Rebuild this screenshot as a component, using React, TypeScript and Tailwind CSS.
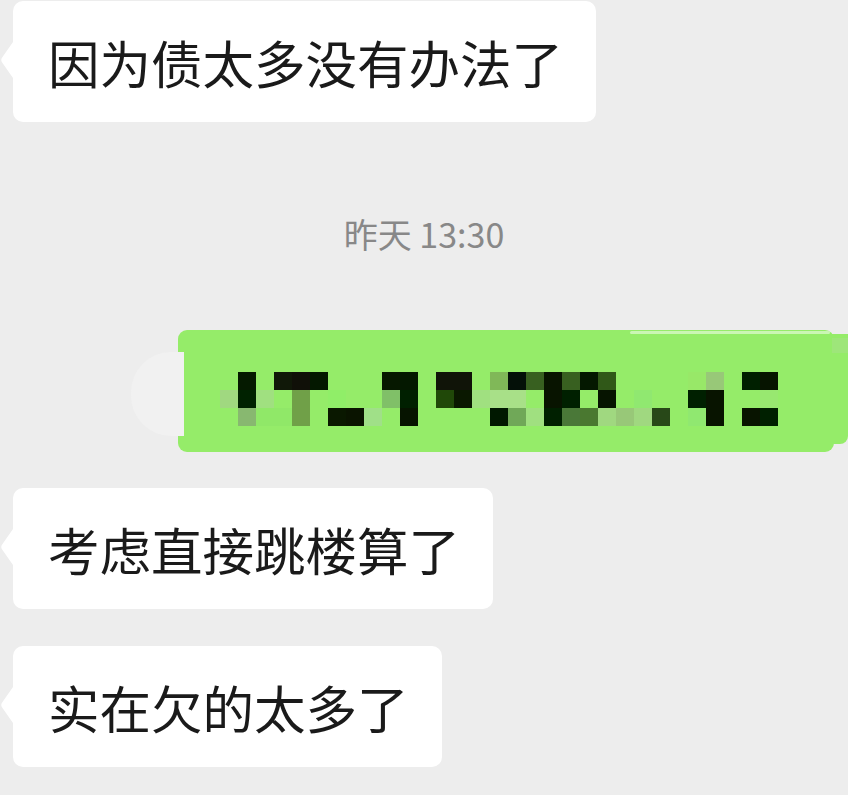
import React from 'react';

const G = '';
// mosaic cells, 31 cols x 3 rows, 18px each; '' means bubble green shows through
const mosaic: string[][] = [
  [G, '#051a00', G, '#101808', '#101008', '#041800', G, G, G, '#061800', '#041800', G, '#101408', '#101408', G, '#80b858', '#041008', '#386020', '#081400', '#386020', '#041800', '#305818', G, G, G, G, '#98e868', '#98c878', G, '#002000', '#061400'],
  ['#a0d880', '#002200', '#a0e080', G, '#70a048', G, '#90ee68', G, G, '#80c068', '#002000', G, '#204808', '#0a1800', '#a0e080', '#a8e088', '#a8e088', G, '#081400', '#002000', G, '#061400', G, '#90e870', G, G, '#002000', '#081400', G, G, '#98e870'],
  [G, '#88b870', '#90e868', '#90e868', '#70a048', G, '#0a1800', '#0a1400', '#a0e088', G, '#061400', G, G, G, G, '#001800', '#70a858', '#a0e080', '#002000', '#4a7838', '#4a7830', '#a0d880', '#98c878', '#a0d880', '#284818', G, '#90e870', '#081400', G, '#081400', '#002000'],
];

const Tail = () => (
  <svg className="absolute left-[-13px] top-[41px]" width="13" height="36" viewBox="0 0 13 36">
    <path d="M13 0 L2.5 15 Q0 18 2.5 21 L13 36 Z" fill="#ffffff" />
  </svg>
);

const Bubble = ({ text, className = '' }: { text: string; className?: string }) => (
  <div
    className={`relative ml-[13px] w-fit h-[121px] flex items-center pl-[35px] pr-[33px] bg-white rounded-[10px] text-[51.5px] leading-none text-[#1a1a1a] ${className}`}
  >
    <Tail />
    <span>{text}</span>
  </div>
);

const Mosaic = () => (
  <svg width="558" height="54" viewBox="0 0 558 54">
    {mosaic.map((row, r) =>
      row.map((c, i) => (c ? <rect key={`${r}-${i}`} x={i * 18} y={r * 18} width="18" height="18" fill={c} /> : null))
    )}
  </svg>
);

export default function App() {
  return (
    <div
      className="w-full min-h-[795px] overflow-hidden bg-[#ededed] flex flex-col"
      style={{ fontFamily: '"Noto Sans CJK SC", "Noto Sans", sans-serif' }}
    >
      <Bubble text="因为债太多没有办法了" className="mt-px" />

      <div className="mt-[92px] h-[40px] leading-[40px] text-center text-[34px] text-[#888888]">昨天 13:30</div>

      {/* my own message, pixelated in the screenshot */}
      <div className="mt-[76px] flex justify-end pr-[14px]">
        <div className="relative w-[656px] h-[122px] rounded-[9px] bg-[#95ec69] pl-[42px] pt-[42px]">
          <Mosaic />
          {/* smudge leftovers around the mosaic */}
          <div className="absolute left-[-47px] top-[22px] w-[53px] h-[84px] rounded-l-[40px] bg-[#f1f1f1]" />
          <div className="absolute left-[652px] top-[4px] w-[18px] h-[110px] rounded-br-[8px] bg-[#95ec69]" />
          <div className="absolute left-[654px] top-[8px] w-[16px] h-[15px] bg-[#9ee67a]" />
          <div className="absolute left-[452px] top-[1px] w-[200px] h-[3px] rounded-full bg-white/50" />
        </div>
      </div>

      <Bubble text="考虑直接跳楼算了" className="mt-[36px]" />
      <Bubble text="实在欠的太多了" className="mt-[37px]" />
    </div>
  );
}
